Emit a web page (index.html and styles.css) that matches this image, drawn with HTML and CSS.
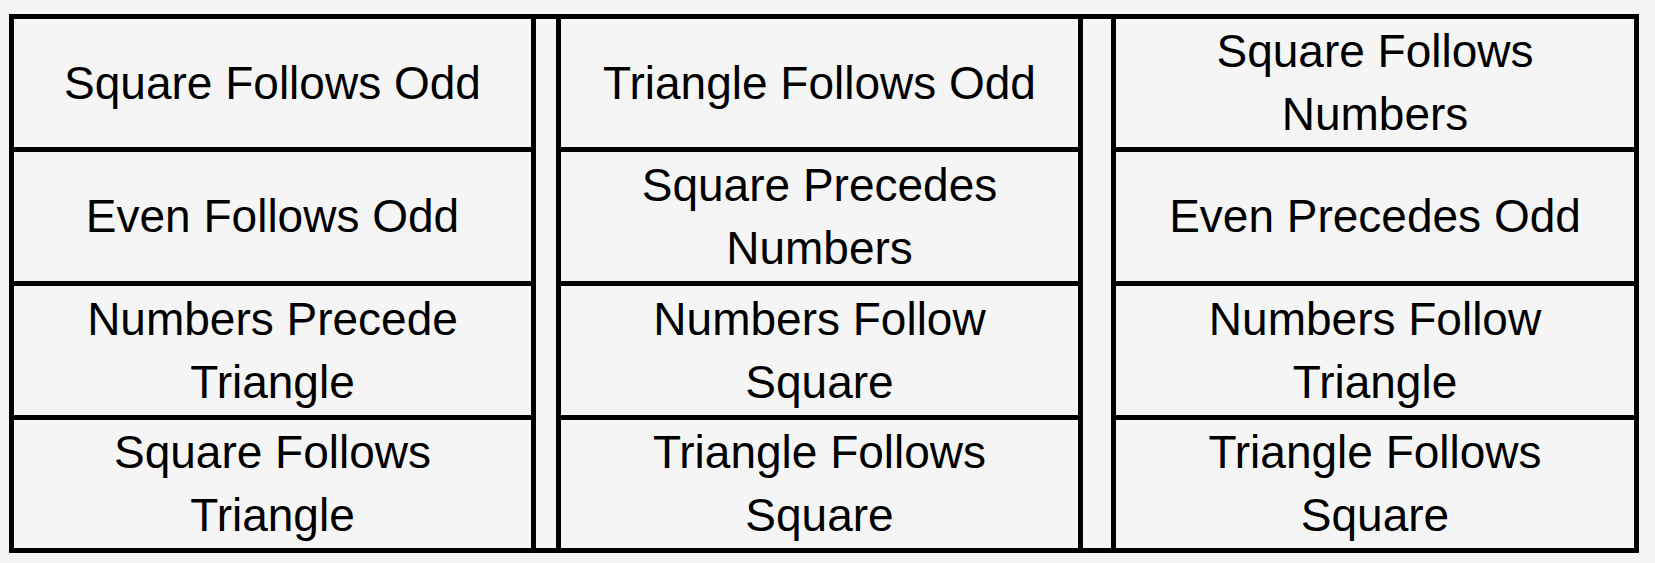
FILE: index.html
```html
<!DOCTYPE html>
<html>
<head>
<meta charset="utf-8">
<link rel="stylesheet" href="styles.css">
</head>
<body>
<div class="board">
  <div class="col">
    <div class="cell r1">Square Follows Odd</div>
    <div class="cell r2">Even Follows Odd</div>
    <div class="cell r3">Numbers Precede Triangle</div>
    <div class="cell r4">Square Follows Triangle</div>
  </div>
  <div class="sep narrow"></div>
  <div class="col">
    <div class="cell r1">Triangle Follows Odd</div>
    <div class="cell r2">Square Precedes Numbers</div>
    <div class="cell r3">Numbers Follow Square</div>
    <div class="cell r4">Triangle Follows Square</div>
  </div>
  <div class="sep wide"></div>
  <div class="col last">
    <div class="cell r1">Square Follows Numbers</div>
    <div class="cell r2">Even Precedes Odd</div>
    <div class="cell r3">Numbers Follow Triangle</div>
    <div class="cell r4">Triangle Follows Square</div>
  </div>
</div>
</body>
</html>
```
FILE: styles.css
```css
html, body {
  margin: 0;
  padding: 0;
  background: #f5f5f5;
}
body {
  padding: 14px 0 0 9px;
  font-family: "Liberation Sans", Arial, sans-serif;
  color: #000;
}
.board {
  display: flex;
  width: 1620px;
  border: 5px solid #000;
}
.col {
  display: flex;
  flex-direction: column;
  width: 517px;
}
.col.last {
  width: 518px;
}
.sep {
  border-left: 5px solid #000;
  border-right: 5px solid #000;
}
.sep.narrow { width: 20px; }
.sep.wide { width: 28px; }
.cell {
  display: flex;
  align-items: center;
  justify-content: center;
  text-align: center;
  padding: 0 30px;
  font-size: 46px;
  line-height: 63px;
  box-sizing: border-box;
}
.cell + .cell {
  border-top: 5px solid #000;
}
.r1 { height: 128px; }
.r2 { height: 134px; }
.r3 { height: 134px; }
.r4 { height: 133px; }
```
